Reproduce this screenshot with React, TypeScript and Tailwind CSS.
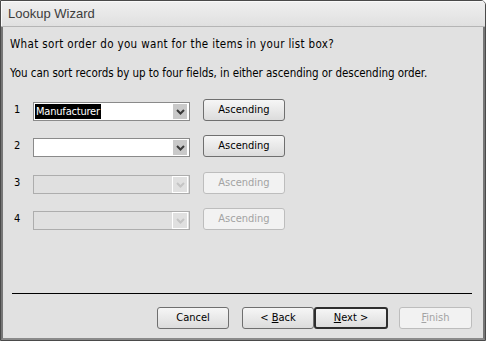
import React from "react";

const font = { fontFamily: '"DejaVu Sans Condensed", "Liberation Sans", Arial, sans-serif' };

function Chevron({ disabled }: { disabled?: boolean }) {
  return (
    <svg width="9" height="6" viewBox="0 0 9 6">
      <path d="M1 1 L4.5 4.5 L8 1" fill="none" stroke={disabled ? "#c4c4c4" : "#3a3a3a"} strokeWidth="2" />
    </svg>
  );
}

function Combo({ value, disabled }: { value?: string; disabled?: boolean }) {
  return (
    <div
      className={`mt-[3px] flex h-[19px] w-[157px] items-center border ${
        disabled ? "border-[#adadad] bg-[#e0e0e0]" : "border-[#8a8a8a] bg-white"
      }`}
    >
      <div className="flex flex-1 items-center pl-px">
        {value && <span className="bg-black px-px text-[11px] leading-[15px] tracking-[-0.2px] text-white">{value}</span>}
      </div>
      {disabled ? (
        <div className="mr-px flex h-[17px] w-[16px] items-center justify-center border border-white bg-[#e0e0e0]">
          <Chevron disabled />
        </div>
      ) : (
        <div className="mr-[2px] flex h-[15px] w-[14px] items-center justify-center bg-[#c9c9c9]">
          <Chevron />
        </div>
      )}
    </div>
  );
}

function Btn({
  children,
  disabled,
  def,
  w,
}: {
  children: React.ReactNode;
  disabled?: boolean;
  def?: boolean;
  w: string;
}) {
  return (
    <div
      className={`flex h-[22px] items-center justify-center rounded-[3px] text-[11px] ${w} ${
        disabled
          ? "border border-[#bdbdbd] bg-[#f2f2f2] text-[#a3a3a3]"
          : def
          ? "border-2 border-[#2e2e2e] bg-gradient-to-b from-[#f6f6f6] to-[#dcdcdc] text-black"
          : "border border-[#6f6f6f] bg-gradient-to-b from-[#f6f6f6] to-[#dcdcdc] text-black"
      }`}
    >
      <span>{children}</span>
    </div>
  );
}

function Row({ n, value, disabled }: { n: string; value?: string; disabled?: boolean }) {
  return (
    <div className="flex h-[22px] items-start">
      <div className="w-[23px] pl-[4px] pt-[3px] text-[11px] leading-[15px] text-black">{n}</div>
      <Combo value={value} disabled={disabled} />
      <div className="w-[13px]" />
      <Btn w="w-[82px]" disabled={disabled}>
        Ascending
      </Btn>
    </div>
  );
}

export default function App() {
  return (
    <div style={font} className="h-[341px] w-[486px] bg-white">
      <div className="flex h-[341px] w-[486px] flex-col overflow-hidden rounded-tr-[5px] border border-[#4a4a4a] bg-[#e2e2e2]">
        <div
          style={{ fontFamily: '"Liberation Sans", Arial, sans-serif' }}
          className="flex h-[26px] items-center border-b border-[#b5b5b5] bg-gradient-to-b from-[#f0f0f0] to-[#e0e0e0] pl-[7px] text-[13px] text-[#3c3c3c] shadow-[inset_1px_1px_0_#fafafa]"
        >
          Lookup Wizard
        </div>
        <div className="flex flex-1 flex-col border-x-[2px] border-b-[2px] border-x-[#767676] border-b-[#8a8a8a] bg-[#e1e1e1] pl-[7px]">
          <div className="pt-[9px] text-[11.5px] leading-[16px] tracking-[0.35px] text-black">
            What sort order do you want for the items in your list box?
          </div>
          <div className="pt-[13px] text-[11.5px] leading-[16px] tracking-[-0.05px] text-black">
            You can sort records by up to four fields, in either ascending or descending order.
          </div>
          <div className="mt-[18px] flex flex-col gap-[14px]">
            <Row n="1" value="Manufacturer" />
            <Row n="2" />
            <div className="mt-px">
              <Row n="3" disabled />
            </div>
            <Row n="4" disabled />
          </div>
          <div className="ml-[2px] mt-[63px] h-px w-[460px] bg-black" />
          <div className="mt-[13px] flex">
            <div className="ml-[147px]">
              <Btn w="w-[72px]">Cancel</Btn>
            </div>
            <div className="ml-[13px]">
              <Btn w="w-[72px]">
                &lt; <span className="underline">B</span>ack
              </Btn>
            </div>
            <Btn w="w-[74px]" def>
              <span className="underline">N</span>ext &gt;
            </Btn>
            <div className="ml-[11px]">
              <Btn w="w-[73px]" disabled>
                <span className="underline">F</span>inish
              </Btn>
            </div>
          </div>
        </div>
      </div>
    </div>
  );
}
